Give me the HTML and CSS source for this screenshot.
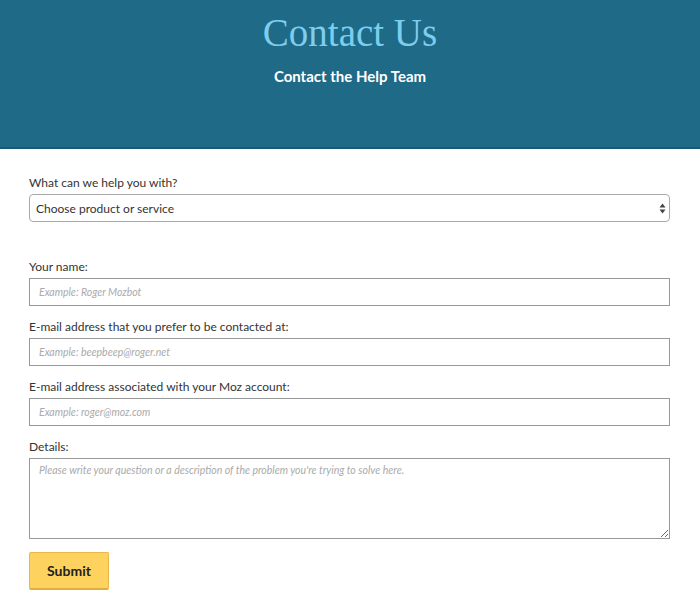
FILE: index.html
```html
<html>
<head>
    <title>Contact Us</title>
    <link rel="stylesheet" href="styles.css">
</head>
<body>
    <div class="header">
        <h1>Contact Us</h1>
        <h2>Contact the Help Team</h2>
    </div>
    <form class="contact-form">
        <div class="form-group topic">
            <label for="topic">What can we help you with?</label>
            <div class="select-wrap">
                <select id="topic">
                    <option>Choose product or service</option>
                </select>
                <svg class="select-arrows" width="7" height="11" viewBox="0 0 7 11">
                    <path d="M3.5 0.5 L6.5 4.5 L0.5 4.5 Z" fill="#444"/>
                    <path d="M3.5 10.5 L6.5 6.5 L0.5 6.5 Z" fill="#444"/>
                </svg>
            </div>
        </div>
        <div class="form-group">
            <label for="name">Your name:</label>
            <input type="text" id="name" placeholder="Example: Roger Mozbot">
        </div>
        <div class="form-group">
            <label for="email">E-mail address that you prefer to be contacted at:</label>
            <input type="text" id="email" placeholder="Example: beepbeep@roger.net">
        </div>
        <div class="form-group">
            <label for="mozEmail">E-mail address associated with your Moz account:</label>
            <input type="text" id="mozEmail" placeholder="Example: roger@moz.com">
        </div>
        <div class="form-group">
            <label for="details">Details:</label>
            <textarea id="details" placeholder="Please write your question or a description of the problem you're trying to solve here."></textarea>
        </div>
        <button type="button" class="submit">Submit</button>
    </form>
</body>
</html>
```

FILE: styles.css
```css
body {
    margin: 0;
    font-family: Lato, "Liberation Sans", sans-serif;
    color: #333;
    background: #fff;
}
.header {
    background: #1f6a87;
    border-bottom: 2px solid #175a74;
    height: 149px;
    box-sizing: border-box;
    text-align: center;
    padding-top: 11px;
}
.header h1 {
    margin: 0;
    font-family: "Liberation Serif", serif;
    font-weight: normal;
    font-size: 39px;
    line-height: 44px;
    color: #7dcdee;
}
.header h2 {
    margin: 12px 0 0;
    font-size: 15px;
    line-height: 18px;
    font-weight: bold;
    color: #fff;
}
.contact-form {
    padding: 26px 30px 20px 29px;
}
.form-group {
    margin-bottom: 13px;
}
.form-group.topic {
    margin-bottom: 37px;
}
.form-group label {
    display: block;
    font-size: 12px;
    line-height: 16px;
    margin-bottom: 3px;
}
.form-group input,
.form-group textarea,
.form-group select {
    display: block;
    width: 100%;
    box-sizing: border-box;
    border: 1px solid #999;
    background: #fff;
    font-family: Lato, "Liberation Sans", sans-serif;
    color: #333;
    outline: none;
}
.form-group input {
    height: 28px;
    padding: 0 9px;
    font-size: 10.5px;
}
.form-group textarea {
    height: 81px;
    padding: 5px 9px;
    font-size: 10.5px;
    resize: vertical;
}
::placeholder {
    color: #aaa;
    font-style: italic;
}
.select-wrap {
    position: relative;
}
.form-group select {
    -webkit-appearance: none;
    appearance: none;
    height: 28px;
    padding: 0 6px;
    font-size: 12px;
    border: 1px solid #aaa;
    border-radius: 4px;
}
.select-arrows {
    position: absolute;
    right: 4px;
    top: 9px;
}
.submit {
    width: 80px;
    height: 38px;
    background: #fdd25f;
    border: 1px solid #e8b94a;
    border-bottom: 2px solid #e1ae3c;
    border-radius: 2px;
    font-family: Lato, "Liberation Sans", sans-serif;
    font-size: 14px;
    font-weight: bold;
    color: #222;
}
```
